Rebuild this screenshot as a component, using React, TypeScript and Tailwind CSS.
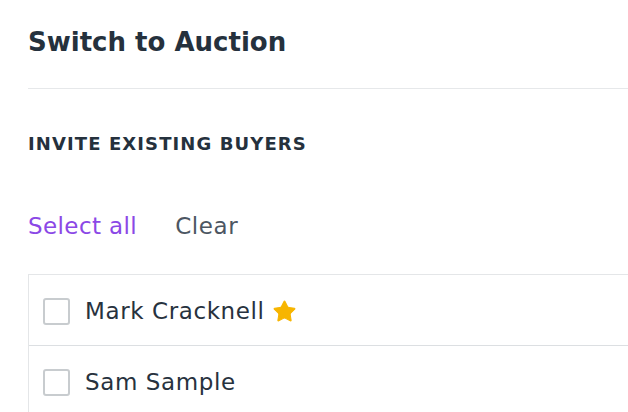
import { Star } from "lucide-react";

const buyers = [
  { name: "Mark Cracknell", starred: true },
  { name: "Sam Sample", starred: false },
];

export default function App() {
  return (
    <div className="w-[628px] h-[412px] overflow-hidden bg-white" style={{ fontFamily: "'DejaVu Sans', sans-serif" }}>
      <div className="w-[720px] pl-[28px]">
        {/* header */}
        <div className="h-[89px] flex items-center border-b border-[#e6e8ea] pb-[4px]">
          <h1 className="text-[26px] font-bold text-[#25313d] leading-none">Switch to Auction</h1>
        </div>

        {/* section title */}
        <div className="pt-[44px]">
          <h2 className="text-[18px] font-bold uppercase tracking-[1.1px] text-[#25313d] leading-[22px]">Invite existing buyers</h2>
        </div>

        {/* actions */}
        <div className="flex items-center gap-[38px] h-[119px] pt-[24px]">
          <button className="text-[23px] tracking-[0.4px] text-[#8b48e6] leading-none">Select all</button>
          <button className="text-[23px] tracking-[0.6px] text-[#4c5662] leading-none">Clear</button>
        </div>

        {/* buyer list */}
        <div className="border-t border-l border-[#e4e6e8]">
          {buyers.map((b) => (
            <div key={b.name} className="h-[71px] flex items-center gap-[15px] pl-[14px] pt-[3px] border-b border-[#dcdfe2]">
              <div className="w-[27px] h-[27px] rounded-[3px] border-2 border-[#c8cccf] bg-white shrink-0" />
              <span className="text-[23px] tracking-[0.6px] text-[#27323e]">{b.name}</span>
              {b.starred && <Star size={25} className="text-[#f7b500] fill-[#f7b500] -ml-[8px]" strokeWidth={1} />}
            </div>
          ))}
        </div>
      </div>
    </div>
  );
}
